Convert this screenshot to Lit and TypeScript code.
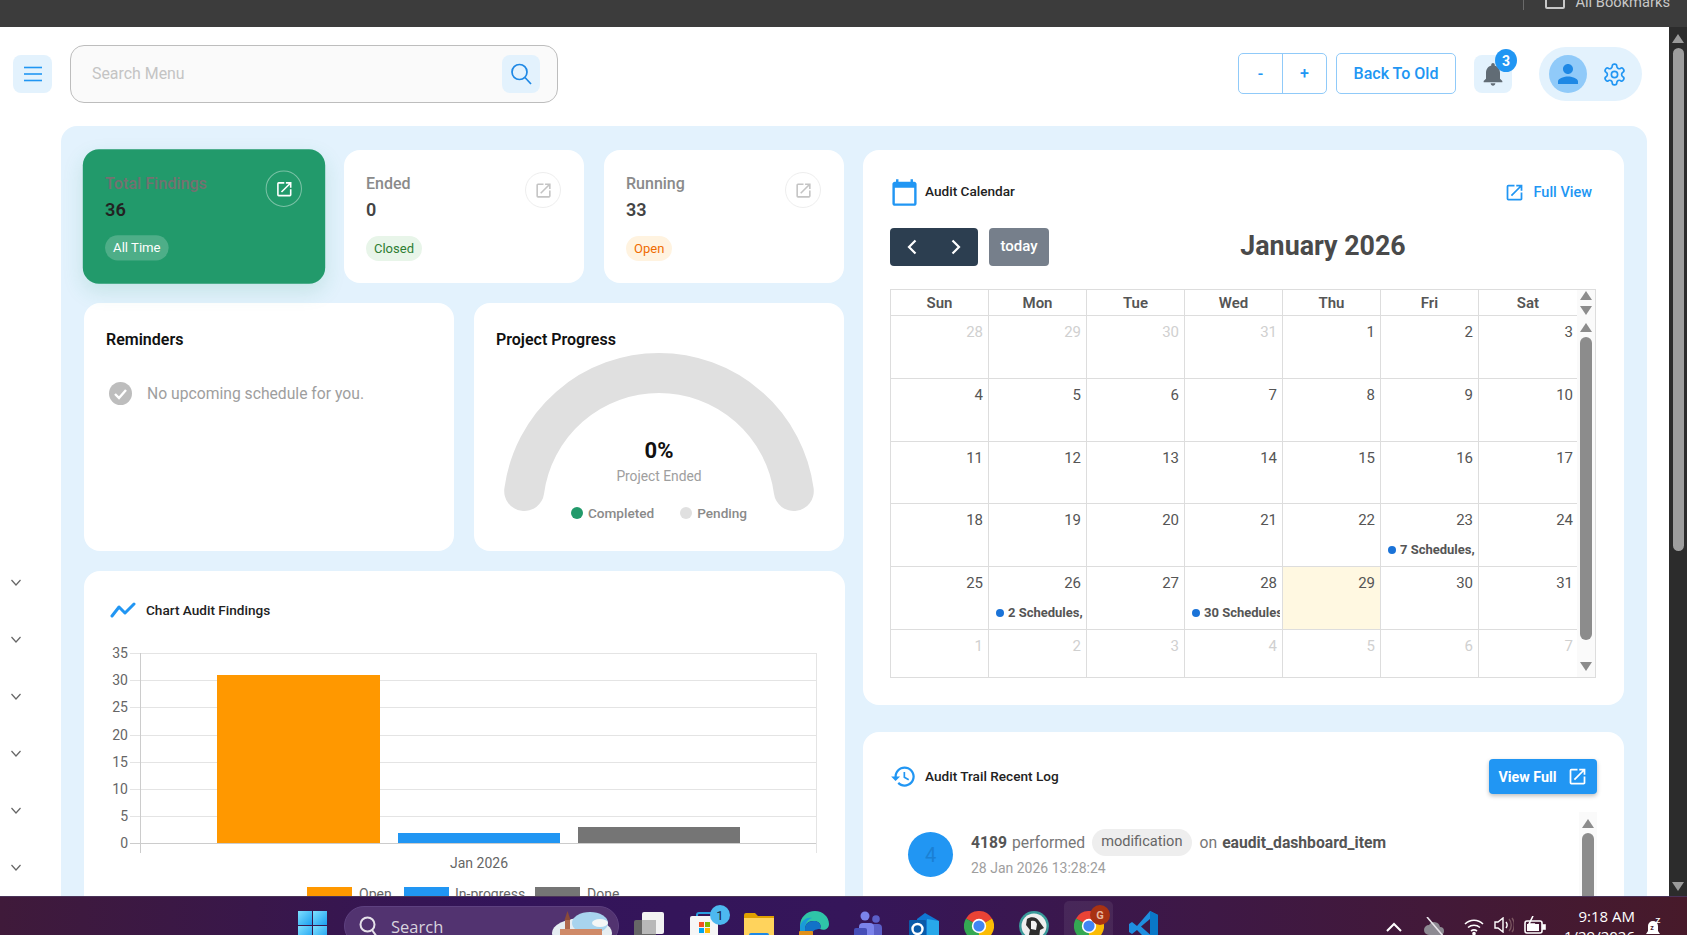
import { LitElement, html, css, svg } from 'lit';
import { customElement } from 'lit/decorators.js';
import { classMap } from 'lit/directives/class-map.js';

const OPEN_NEW =
  'M19 19H5V5h7V3H5a2 2 0 0 0-2 2v14a2 2 0 0 0 2 2h14c1.1 0 2-.9 2-2v-7h-2v7zM14 3v2h3.59l-9.83 9.83 1.41 1.41L19 6.41V10h2V3h-7z';
const GEAR =
  'M12.22 2h-.44a2 2 0 0 0-2 2v.18a2 2 0 0 1-1 1.73l-.43.25a2 2 0 0 1-2 0l-.15-.08a2 2 0 0 0-2.73.73l-.22.38a2 2 0 0 0 .73 2.73l.15.1a2 2 0 0 1 1 1.72v.51a2 2 0 0 1-1 1.74l-.15.09a2 2 0 0 0-.73 2.73l.22.38a2 2 0 0 0 2.73.73l.15-.08a2 2 0 0 1 2 0l.43.25a2 2 0 0 1 1 1.73V20a2 2 0 0 0 2 2h.44a2 2 0 0 0 2-2v-.18a2 2 0 0 1 1-1.73l.43-.25a2 2 0 0 1 2 0l.15.08a2 2 0 0 0 2.73-.73l.22-.39a2 2 0 0 0-.73-2.73l-.15-.08a2 2 0 0 1-1-1.74v-.5a2 2 0 0 1 1-1.74l.15-.09a2 2 0 0 0 .73-2.73l-.22-.38a2 2 0 0 0-2.73-.73l-.15.08a2 2 0 0 1-2 0l-.43-.25a2 2 0 0 1-1-1.73V4a2 2 0 0 0-2-2z';

const matIcon = (d: string, size: number, cls = '') =>
  html`<svg class=${cls} width=${size} height=${size} viewBox="0 0 24 24" fill="currentColor"><path d=${d} /></svg>`;

const chromeIcon = html`<svg width="30" height="30" viewBox="0 0 30 30">
  <path d="M15 15L2 7.500A15 15 0 0 1 28 7.500z" fill="#ea4335" />
  <path d="M15 15L28 7.500A15 15 0 0 1 15 30z" fill="#fbbc04" />
  <path d="M15 15L15 30A15 15 0 0 1 2 7.500z" fill="#34a853" />
  <circle cx="15" cy="15" r="7.200" fill="#fff" />
  <circle cx="15" cy="15" r="5.600" fill="#4285f4" />
</svg>`;

interface Stat {
  title: string;
  value: string;
  badge: string;
  kind: string;
}

const STATS: Stat[] = [
  { title: 'Total Findings', value: '36', badge: 'All Time', kind: 'active' },
  { title: 'Ended', value: '0', badge: 'Closed', kind: 'closed' },
  { title: 'Running', value: '33', badge: 'Open', kind: 'open' },
];

interface Day {
  n: number;
  other?: boolean;
  today?: boolean;
  event?: string;
}

const buildDays = (): Day[] => {
  const days: Day[] = [28, 29, 30, 31].map((n) => ({ n, other: true }));
  for (let n = 1; n <= 31; n++) {
    const d: Day = { n };
    if (n === 23) d.event = '7 Schedules,';
    if (n === 26) d.event = '2 Schedules,';
    if (n === 28) d.event = '30 Schedules,';
    if (n === 29) d.today = true;
    days.push(d);
  }
  for (let n = 1; n <= 7; n++) days.push({ n, other: true });
  return days;
};

const TICKS = [
  { v: 35, y: 653 },
  { v: 30, y: 680 },
  { v: 25, y: 707 },
  { v: 20, y: 735 },
  { v: 15, y: 762 },
  { v: 10, y: 789 },
  { v: 5, y: 816 },
  { v: 0, y: 843 },
];

const BARS = [
  { x: 217, w: 163, top: 675, fill: '#ff9800' },
  { x: 398, w: 162, top: 833, fill: '#2196f3' },
  { x: 578, w: 162, top: 827, fill: '#757575' },
];

const LEGEND = [
  { x: 307, label: 'Open', fill: '#ff9800' },
  { x: 404, label: 'In-progress', fill: '#2196f3', tx: 51 },
  { x: 535, label: 'Done', fill: '#757575' },
];

@customElement('app-root')
export class AppRoot extends LitElement {
  static styles = css`
    :host {
      display: flex;
      flex-direction: column;
      height: 935px;
      overflow: hidden;
      font-family: Roboto, 'Liberation Sans', sans-serif;
      background: #fff;
    }

    svg {
      display: block;
      flex: none;
    }

    /* browser chrome, only the bottom of it shows */
    .chrome {
      height: 27px;
      flex: none;
      background: #3c3c3c;
      display: flex;
      justify-content: flex-end;
      align-items: flex-start;
      overflow: hidden;
      padding-right: 17px;
      color: #c8c8c8;
      font-size: 14.7px;
    }
    .chrome-sep {
      width: 1px;
      height: 10px;
      background: #6a6a6a;
      margin-right: 21px;
    }
    .chrome-box {
      width: 20px;
      height: 17px;
      margin-top: -8px;
      margin-right: 10px;
      border: 2px solid #c8c8c8;
      border-radius: 2px;
      box-sizing: border-box;
    }
    .chrome-text {
      margin-top: -7px;
    }

    .page {
      flex: 1;
      min-height: 0;
      display: flex;
    }
    .content {
      flex: 1;
      min-width: 0;
      display: flex;
      flex-direction: column;
    }

    .page-scroll {
      width: 18px;
      flex: none;
      background: #2c2c2c;
      display: flex;
      flex-direction: column;
      align-items: center;
      position: relative;
    }
    .page-scroll .up {
      margin-top: 7px;
    }
    .page-scroll .thumb {
      width: 11px;
      height: 503px;
      margin-top: 5px;
      border-radius: 6px;
      background: #9e9e9e;
    }
    .page-scroll .down {
      margin-top: auto;
      margin-bottom: 5px;
    }
    .arrow-up {
      width: 0;
      height: 0;
      border-left: 6px solid transparent;
      border-right: 6px solid transparent;
      border-bottom: 9px solid #9a9a9a;
    }
    .arrow-down {
      width: 0;
      height: 0;
      border-left: 6px solid transparent;
      border-right: 6px solid transparent;
      border-top: 9px solid #9a9a9a;
    }

    /* top header */
    .header {
      height: 99px;
      flex: none;
      box-sizing: border-box;
      padding: 0 27px 5px 13px;
      display: flex;
      align-items: center;
    }
    .soft-btn {
      width: 39px;
      height: 38px;
      background: #e3f2fd;
      border-radius: 8px;
      display: flex;
      align-items: center;
      justify-content: center;
      color: #2196f3;
      flex: none;
      position: relative;
    }
    .search {
      width: 488px;
      height: 58px;
      margin-left: 18px;
      box-sizing: border-box;
      border: 1px solid #bdbdbd;
      border-radius: 14px;
      background: #fafafa;
      display: flex;
      align-items: center;
      justify-content: space-between;
      padding: 0 17px 2px 21px;
      font-size: 15.9px;
      color: #c4c4c4;
    }
    .search .soft-btn {
      width: 38px;
      margin-top: 2px;
      color: #1e88e5;
    }
    .header-right {
      margin-left: auto;
      display: flex;
      align-items: center;
    }
    .zoom-group {
      display: flex;
      height: 41px;
      margin-top: -1px;
      box-sizing: border-box;
      border: 1px solid #90caf9;
      border-radius: 5px;
      color: #2196f3;
      font-size: 16px;
      font-weight: 500;
    }
    .zoom-group span {
      width: 43px;
      display: flex;
      align-items: center;
      justify-content: center;
    }
    .zoom-group span + span {
      border-left: 1px solid #90caf9;
    }
    .back-btn {
      height: 41px;
      width: 120px;
      margin: -1px 0 0 9px;
      box-sizing: border-box;
      border: 1px solid #90caf9;
      border-radius: 5px;
      color: #2196f3;
      font-size: 16px;
      font-weight: 500;
      display: flex;
      align-items: center;
      justify-content: center;
    }
    .bell {
      margin-left: 18px;
      width: 38px;
      color: #616c75;
    }
    .bell-badge {
      position: absolute;
      top: -6px;
      right: -5px;
      width: 22px;
      height: 23px;
      border-radius: 50%;
      background: #2196f3;
      color: #fff;
      font-size: 14px;
      font-weight: 700;
      display: flex;
      align-items: center;
      justify-content: center;
    }
    .user-pill {
      margin-left: 27px;
      width: 103px;
      height: 54px;
      background: #e3f2fd;
      border-radius: 27px;
      display: flex;
      align-items: center;
      padding-left: 10px;
      box-sizing: border-box;
      color: #2196f3;
    }
    .avatar {
      width: 38px;
      height: 38px;
      border-radius: 50%;
      background: #90caf9;
      color: #1e88e5;
      display: flex;
      align-items: center;
      justify-content: center;
      margin-right: 15px;
    }

    .body {
      flex: 1;
      min-height: 0;
      display: flex;
    }

    /* sidebar, labels are hidden in the collapsed state */
    .sidebar {
      width: 61px;
      flex: none;
      box-sizing: border-box;
      display: flex;
      flex-direction: column;
      color: #666;
      overflow: hidden;
    }
    .side-mark {
      width: 1px;
      height: 11px;
      margin-top: 191px;
      background: #1565c0;
    }
    .side-rule {
      width: 43px;
      height: 1px;
      margin-top: 172px;
      margin-bottom: 65px;
      background: #eeeeee;
    }
    .side-chevron {
      margin: 0 0 0 11px;
      height: 57px;
      flex: none;
    }

    .panel {
      flex: 1;
      min-width: 0;
      margin-right: 22px;
      background: #e3f2fd;
      border-radius: 16px 16px 0 0;
      padding: 24px 23px 0;
      box-sizing: border-box;
      display: grid;
      grid-template-columns: 761px 761px;
      column-gap: 18px;
      align-items: start;
      overflow: hidden;
    }
    .col {
      display: flex;
      flex-direction: column;
      gap: 20px;
    }
    .col.right {
      gap: 27px;
    }
    .card {
      background: #fff;
      border-radius: 16px;
      box-sizing: border-box;
    }

    /* stat cards */
    .stats {
      width: 760px;
      display: grid;
      grid-template-columns: repeat(3, 1fr);
      gap: 20px;
    }
    .stat {
      height: 133px;
      padding: 23px 22px 0;
      position: relative;
    }
    .stat-title {
      font-size: 16px;
      font-weight: 500;
      line-height: 22px;
      color: #8a8a8a;
    }
    .stat-value {
      font-size: 18px;
      font-weight: 600;
      line-height: 22px;
      margin-top: 4px;
      color: #444;
    }
    .stat-badge {
      display: inline-block;
      margin-top: 15px;
      height: 25px;
      line-height: 25px;
      padding: 0 8px;
      border-radius: 13px;
      font-size: 13px;
    }
    .stat-badge.closed {
      background: #e8f5e9;
      color: #2e7d32;
    }
    .stat-badge.open {
      background: #fff3e0;
      color: #ef6c00;
    }
    .stat-badge.active {
      margin-top: 14px;
      background: rgba(255, 255, 255, 0.2);
      color: #fff;
    }
    .stat-link {
      position: absolute;
      top: 22px;
      right: 23px;
      width: 36px;
      height: 36px;
      border: 1px solid #eeeeee;
      border-radius: 50%;
      box-sizing: border-box;
      color: #c4c4c4;
      display: flex;
      align-items: center;
      justify-content: center;
    }
    .stat.active {
      background: #229a6b;
      transform: scale(1.01);
      box-shadow: 0 8px 20px rgba(34, 154, 107, 0.15);
    }
    .stat.active .stat-title {
      color: #757070;
    }
    .stat.active .stat-value {
      color: #222;
    }
    .stat.active .stat-link {
      top: 21px;
      border-color: rgba(255, 255, 255, 0.4);
      color: #fff;
    }

    .row2 {
      width: 760px;
      display: grid;
      grid-template-columns: 370px 370px;
      gap: 20px;
    }
    .row2 .card {
      height: 248px;
      padding: 26px 22px;
    }
    .card-title {
      font-size: 16px;
      font-weight: 600;
      line-height: 22px;
      color: #111;
    }
    .no-schedule {
      margin: 31px 0 0 3px;
      display: flex;
      align-items: center;
      gap: 15px;
      font-size: 15.7px;
      color: #9e9e9e;
    }

    /* gauge */
    .gauge {
      position: relative;
      height: 180px;
      margin-top: 2px;
      display: flex;
      flex-direction: column;
      align-items: center;
    }
    .gauge svg {
      position: absolute;
      top: 0;
      left: 7px;
    }
    .gauge-value {
      margin-top: 85px;
      font-size: 22px;
      font-weight: 700;
      line-height: 26px;
      color: #111;
      position: relative;
    }
    .gauge-label {
      margin-top: 3px;
      font-size: 13.8px;
      line-height: 18px;
      color: #9e9e9e;
      position: relative;
    }
    .gauge-legend {
      margin-top: 19px;
      display: flex;
      gap: 26px;
      font-size: 13.6px;
      font-weight: 500;
      line-height: 18px;
      color: #8a8a8a;
      position: relative;
    }
    .gauge-legend span {
      display: flex;
      align-items: center;
      gap: 5px;
    }
    .dot {
      width: 12px;
      height: 12px;
      border-radius: 50%;
    }
    .dot.done {
      background: #229a6b;
    }
    .dot.pending {
      background: #e0e0e0;
    }

    /* chart */
    .chart-card {
      padding-top: 28px;
      height: 500px;
    }
    .head-row {
      display: flex;
      align-items: center;
      font-size: 13.6px;
      font-weight: 500;
      color: #222;
    }
    .chart-card .head-row {
      height: 22px;
      padding-left: 26px;
      gap: 10px;
      color: #222;
    }
    .chart-svg {
      margin-top: 19px;
    }
    .chart-svg text {
      font-family: Roboto, 'Liberation Sans', sans-serif;
      font-size: 14px;
      fill: #666;
    }

    /* calendar */
    .cal-card {
      height: 555px;
      padding: 30px 27px 0 27px;
    }
    .cal-head {
      height: 24px;
      gap: 6px;
      color: #2196f3;
    }
    .cal-head .name,
    .trail-head .name {
      color: #222;
      padding-bottom: 2px;
    }
    .full-view {
      margin-left: auto;
      margin-right: 5px;
      display: flex;
      align-items: center;
      gap: 9px;
      font-size: 14.5px;
      color: #2196f3;
    }
    .toolbar {
      margin-top: 24px;
      height: 38px;
      display: flex;
      align-items: center;
      justify-content: space-between;
    }
    .toolbar-left {
      display: flex;
      gap: 11px;
    }
    .nav {
      display: flex;
      width: 88px;
      height: 38px;
      background: #2c3e50;
      border-radius: 4px;
      color: #fff;
    }
    .nav div {
      flex: 1;
      display: flex;
      align-items: center;
      justify-content: center;
    }
    .today-btn {
      width: 60px;
      height: 38px;
      box-sizing: border-box;
      padding-bottom: 2px;
      border-radius: 4px;
      background: #767f8b;
      color: #fff;
      font-size: 15px;
      font-weight: 500;
      display: flex;
      align-items: center;
      justify-content: center;
    }
    .month {
      font-size: 26.8px;
      font-weight: 700;
      color: #4a4a4a;
      padding-bottom: 2px;
    }
    .toolbar-end {
      width: 0;
    }
    .cal-table {
      margin-top: 23px;
      width: 706px;
      box-sizing: border-box;
      border: 1px solid #ddd;
      display: grid;
      grid-template-columns: repeat(7, 98px) 1fr;
      grid-template-rows: 26px 63px 63px 62px 63px 63px 47px;
      position: relative;
    }
    .dow {
      font-size: 15px;
      font-weight: 600;
      color: #555;
      display: flex;
      align-items: center;
      justify-content: center;
      border-right: 1px solid #ddd;
      border-bottom: 1px solid #ddd;
    }
    .dow.last {
      border-right: none;
    }
    .cell {
      border-right: 1px solid #ddd;
      border-bottom: 1px solid #ddd;
      padding: 5.5px 5px 0 0;
      text-align: right;
      font-size: 15px;
      line-height: 20px;
      color: #555;
      overflow: hidden;
      min-width: 0;
    }
    .cell.last {
      border-right: none;
      padding-right: 4px;
    }
    .cell.other {
      color: #d0d0d0;
    }
    .cell.bottom {
      border-bottom: none;
    }
    .cell.today {
      background: #fff8e1;
    }
    .event {
      margin-top: 11.5px;
      padding-left: 7px;
      display: flex;
      align-items: center;
      gap: 4px;
      white-space: nowrap;
      font-size: 13px;
      font-weight: 700;
      line-height: 18px;
      color: #555;
      margin-right: -3px;
      overflow: hidden;
    }
    .event i {
      width: 8px;
      height: 8px;
      flex: none;
      border-radius: 50%;
      background: #1a73d8;
    }
    .cal-scroll-head {
      grid-column: 8;
      grid-row: 1;
      background: #fafafa;
      display: flex;
      flex-direction: column;
      align-items: center;
      justify-content: center;
      gap: 6px;
    }
    .cal-scroll {
      grid-column: 8;
      grid-row: 2 / 8;
      background: #fafafa;
      display: flex;
      flex-direction: column;
      align-items: center;
      padding: 7px 0 6px;
    }
    .cal-scroll .thumb,
    .log-scroll .thumb {
      width: 12px;
      border-radius: 6px;
      background: #8c8c8c;
    }
    .cal-scroll .thumb {
      height: 303px;
      margin-top: 5px;
    }
    .cal-scroll .arrow-down {
      margin-top: auto;
    }
    .small-up {
      border-bottom-color: #8c8c8c;
    }
    .small-down {
      border-top-color: #8c8c8c;
    }

    /* audit trail */
    .trail-card {
      height: 300px;
      padding: 27px 27px 0 27px;
    }
    .trail-head {
      height: 35px;
      gap: 8px;
      color: #2196f3;
    }
    .view-full {
      margin-left: auto;
      width: 108px;
      height: 35px;
      background: #2196f3;
      border-radius: 4px;
      box-shadow: 0 2px 4px rgba(0, 0, 0, 0.25);
      color: #fff;
      font-size: 14.3px;
      font-weight: 700;
      display: flex;
      align-items: center;
      justify-content: center;
      gap: 10px;
    }
    .log-area {
      margin-top: 18px;
      display: flex;
      height: 200px;
    }
    .log-list {
      flex: 1;
      padding: 20px 0 0 18px;
    }
    .log {
      display: flex;
      gap: 18px;
    }
    .log-avatar {
      width: 45px;
      height: 45px;
      border-radius: 50%;
      background: #2196f3;
      color: #1a80d4;
      font-size: 20px;
      display: flex;
      align-items: center;
      justify-content: center;
      flex: none;
    }
    .log-line {
      margin-top: -3px;
      display: flex;
      align-items: center;
      height: 27px;
      font-size: 15.7px;
      color: #777;
      gap: 5px;
    }
    .log-line b {
      font-weight: 700;
      color: #555;
    }
    .log-pill {
      height: 27px;
      line-height: 25px;
      padding: 0 9px;
      margin: 0 3px 0 2px;
      border-radius: 14px;
      background: #eeeeee;
      color: #666;
      font-size: 14.6px;
    }
    .log-date {
      margin-top: 3px;
      font-size: 14px;
      line-height: 18px;
      color: #9e9e9e;
    }
    .log-scroll {
      width: 18px;
      background: #fafafa;
      display: flex;
      flex-direction: column;
      align-items: center;
      padding-top: 7px;
    }
    .log-scroll .thumb {
      margin-top: 5px;
      height: 150px;
    }

    /* windows taskbar, cut off by the window bottom */
    .taskbar {
      height: 39px;
      flex: none;
      box-sizing: border-box;
      border-top: 1px solid #4a3358;
      background: linear-gradient(90deg, #3f1a3a 0%, #33145a 30%, #35165a 50%, #3e1845 72%, #471a2a 100%);
      display: flex;
      align-items: flex-start;
      padding: 14px 0 0 298px;
      overflow: hidden;
      color: #fff;
    }
    .task-search {
      width: 275px;
      height: 40px;
      margin: -5px 15px 0 17px;
      border-radius: 20px;
      background: #523370;
      border: 1px solid #5e4180;
      display: flex;
      align-items: flex-start;
      padding: 9px 0 0 14px;
      box-sizing: border-box;
      gap: 13px;
      font-family: 'Open Sans', sans-serif;
      font-size: 16.5px;
      line-height: 22px;
      color: #d8d4de;
      position: relative;
    }
    .task-search svg.scene {
      position: absolute;
      right: 6px;
      top: 4px;
    }
    .task-icons {
      display: flex;
      gap: 25px;
    }
    .task-icon {
      width: 30px;
      height: 30px;
      position: relative;
    }
    .task-icon.current::before {
      content: '';
      position: absolute;
      left: -10px;
      right: -9px;
      top: -10px;
      height: 50px;
      border-radius: 5px;
      background: rgba(255, 255, 255, 0.07);
    }
    .task-icon svg {
      position: relative;
    }
    .count {
      position: absolute;
      top: -6px;
      right: -11px;
      width: 20px;
      height: 20px;
      border-radius: 50%;
      background: #4db8f0;
      color: #1b2440;
      font-size: 13px;
      display: flex;
      align-items: center;
      justify-content: center;
    }
    .g-badge {
      position: absolute;
      top: -6px;
      right: -6px;
      width: 20px;
      height: 20px;
      border-radius: 50%;
      background: #a83212;
      color: #e8b8a0;
      font-size: 11px;
      font-weight: 700;
      display: flex;
      align-items: center;
      justify-content: center;
    }
    .tray {
      margin-left: auto;
      display: flex;
      align-items: flex-start;
      padding-right: 25px;
    }
    .tray-up {
      margin-top: 11px;
    }
    .tray-cloud {
      margin: 6px 0 0 22px;
    }
    .tray-wifi {
      margin: 7px 0 0 18px;
    }
    .tray-sound {
      margin: 6px 0 0 10px;
    }
    .tray-battery {
      margin: 5px 0 0 10px;
    }
    .clock {
      margin: -5px 0 0 18px;
      text-align: right;
      font-family: 'Open Sans', sans-serif;
      font-size: 15px;
      line-height: 20px;
    }
    .tray-bell {
      margin: 6px 0 0 10px;
    }
  `;

  private renderStat(s: Stat) {
    return html`
      <div class=${classMap({ card: true, stat: true, active: s.kind === 'active' })}>
        <div class="stat-title">${s.title}</div>
        <div class="stat-value">${s.value}</div>
        <span class="stat-badge ${s.kind}">${s.badge}</span>
        <div class="stat-link">${matIcon(OPEN_NEW, 19)}</div>
      </div>
    `;
  }

  private renderChart() {
    return html`
      <svg class="chart-svg" width="760" height="340" viewBox="84 640 760 340">
        ${TICKS.map(
          (t) => svg`
            <line x1="130" x2="816" y1=${t.y + 0.5} y2=${t.y + 0.5} stroke=${t.v === 0 ? '#cccccc' : '#e4e4e4'} />
            <text x="128" y=${t.y + 5} text-anchor="end">${t.v}</text>
          `,
        )}
        <line x1="140.5" x2="140.5" y1="653" y2="853" stroke="#cccccc" />
        <line x1="816.5" x2="816.5" y1="653" y2="853" stroke="#e4e4e4" />
        ${BARS.map((b) => svg`<rect x=${b.x} y=${b.top} width=${b.w} height=${843 - b.top} fill=${b.fill} />`)}
        <text x="479" y="868" text-anchor="middle">Jan 2026</text>
        ${LEGEND.map(
          (l) => svg`
            <rect x=${l.x} y="887" width="45" height="14" fill=${l.fill} />
            <text x=${l.x + (l.tx ?? 52)} y="899">${l.label}</text>
          `,
        )}
      </svg>
    `;
  }

  private renderCalendar() {
    const dows = ['Sun', 'Mon', 'Tue', 'Wed', 'Thu', 'Fri', 'Sat'];
    const days = buildDays();
    return html`
      <div class="cal-table">
        ${dows.map((d, i) => html`<div class=${classMap({ dow: true, last: i === 6 })}>${d}</div>`)}
        <div class="cal-scroll-head">
          <div class="arrow-up small-up"></div>
          <div class="arrow-down small-down"></div>
        </div>
        ${days.map(
          (d, i) => html`
            <div
              class=${classMap({
                cell: true,
                other: !!d.other,
                today: !!d.today,
                last: i % 7 === 6,
                bottom: i >= 35,
              })}
            >
              ${d.n}
              ${d.event ? html`<div class="event"><i></i>${d.event}</div>` : ''}
            </div>
          `,
        )}
        <div class="cal-scroll">
          <div class="arrow-up small-up"></div>
          <div class="thumb"></div>
          <div class="arrow-down small-down"></div>
        </div>
      </div>
    `;
  }

  private renderTaskbar() {
    return html`
      <div class="taskbar">
        <svg width="29" height="30" viewBox="0 0 29 30">
          <defs>
            <linearGradient id="win" x1="0" y1="0" x2="1" y2="1">
              <stop offset="0" stop-color="#7fe0ff" />
              <stop offset="1" stop-color="#1a9ff0" />
            </linearGradient>
          </defs>
          <rect width="14" height="14" fill="url(#win)" />
          <rect x="15" width="14" height="14" fill="url(#win)" />
          <rect y="15" width="14" height="14" fill="url(#win)" />
          <rect x="15" y="15" width="14" height="14" fill="url(#win)" />
        </svg>
        <div class="task-search">
          <svg width="19" height="22" viewBox="0 0 19 22" fill="none" stroke="#e6e2ea" stroke-width="2">
            <circle cx="8.500" cy="8.500" r="7" />
            <line x1="13" y1="14" x2="18" y2="21" />
          </svg>
          Search
          <svg class="scene" width="60" height="34" viewBox="0 0 60 34">
            <ellipse cx="30" cy="22" rx="30" ry="15" fill="#e6eef2" />
            <ellipse cx="38" cy="12" rx="18" ry="11" fill="#a8d4ee" />
            <ellipse cx="48" cy="12" rx="8" ry="4" fill="#f4f6f6" />
            <rect x="13" y="8" width="5" height="12" fill="#b06a4e" />
            <path d="M15.500 0l3 9h-6z" fill="#8a4a38" />
            <rect x="8" y="18" width="42" height="16" fill="#cf8a68" />
            <rect x="8" y="24" width="42" height="2" fill="#e8c4a8" />
          </svg>
        </div>
        <div class="task-icons">
          <div class="task-icon">
            <svg width="30" height="30" viewBox="0 0 30 30">
              <rect x="0" y="9" width="22" height="22" rx="2" fill="#666" />
              <rect x="8" y="1" width="22" height="22" rx="2" fill="#f2f2f2" />
              <rect x="8" y="9" width="14" height="14" fill="#b8b8b8" />
            </svg>
          </div>
          <div class="task-icon">
            <svg width="30" height="30" viewBox="0 0 30 30">
              <path d="M8 7V4a2 2 0 0 1 2-2h12" fill="none" stroke="#2a9fe0" stroke-width="2" />
              <rect x="1" y="5" width="28" height="27" rx="2" fill="#f6f6f6" />
              <rect x="10" y="11" width="5" height="5" fill="#f25022" />
              <rect x="16" y="11" width="5" height="5" fill="#7fba00" />
              <rect x="10" y="17" width="5" height="5" fill="#00a4ef" />
              <rect x="16" y="17" width="5" height="5" fill="#ffb900" />
            </svg>
            <span class="count">1</span>
          </div>
          <div class="task-icon">
            <svg width="30" height="30" viewBox="0 0 30 30">
              <path d="M0 4a2 2 0 0 1 2-2h9l3 3h16v26H0z" fill="#e0a000" />
              <rect y="7" width="30" height="24" fill="#ffd35c" />
              <rect x="5" y="22" width="20" height="9" rx="2" fill="#1e88e5" />
            </svg>
          </div>
          <div class="task-icon">
            <svg width="30" height="30" viewBox="0 0 30 30">
              <path d="M1 15C1 6 8 0 16 0c8 0 14 6 14 13 0 5-5 7-9 5 2-4-1-8-6-8C9 10 6 13 6 18c-3 0-5-1-5-3z" fill="#2fc4a8" />
              <path d="M1 15C3 9 8 6 13 7c-4 1-7 5-7 11l0 2H1z" fill="#1a9ad8" />
              <path d="M6 18c0-5 3-8 9-8 5 0 8 4 6 8-5 0-8 2-8 6 0 2 1 4 3 6C8 30 6 23 6 18z" fill="#1272c8" />
              <rect x="0" y="20" width="14" height="12" rx="1" fill="#e0901a" />
            </svg>
          </div>
          <div class="task-icon">
            <svg width="30" height="30" viewBox="0 0 30 30">
              <circle cx="11" cy="5" r="4.500" fill="#7b83eb" />
              <circle cx="22" cy="8" r="3.800" fill="#5b5fc7" />
              <rect x="16" y="13" width="12" height="20" rx="4" fill="#5b5fc7" />
              <rect x="5" y="12" width="15" height="22" rx="4" fill="#7b83eb" />
              <rect x="0" y="17" width="13" height="13" rx="2" fill="#464eb8" />
            </svg>
          </div>
          <div class="task-icon">
            <svg width="30" height="30" viewBox="0 0 30 30">
              <path d="M16 2l14 8v22H8V8z" fill="#0f78d4" />
              <path d="M18 8l12 2v22H18z" fill="#28a8ea" />
              <rect x="0" y="9" width="17" height="18" rx="1" fill="#0a5aa8" />
              <circle cx="8.500" cy="18" r="5" fill="none" stroke="#fff" stroke-width="2.400" />
            </svg>
          </div>
          <div class="task-icon">${chromeIcon}</div>
          <div class="task-icon">
            <svg width="30" height="30" viewBox="0 0 30 30">
              <circle cx="15" cy="15" r="15" fill="#3a9a9a" />
              <circle cx="15" cy="15" r="12.500" fill="#efefef" />
              <path d="M8 8c4-3 10-2 12 2l5 7-4 2-1 9H9l2-9-4-5z" fill="#2e2e2e" />
              <path d="M12 10c3-1 5 0 6 3l-1 6-5-1z" fill="#f4f4f4" />
            </svg>
          </div>
          <div class="task-icon current">
            ${chromeIcon}
            <span class="g-badge">G</span>
          </div>
          <div class="task-icon">
            <svg width="30" height="30" viewBox="0 0 30 30">
              <path d="M21 0l8 4v26l-8 2L8 19l-5 4-3-2V13l3-2 5 4z" fill="#1e8fe0" />
              <path d="M21 8L12 15.500l9 8z" fill="#3d1848" />
              <path d="M21 0l8 4v26l-8 2z" fill="#0a78c8" />
            </svg>
          </div>
        </div>
        <div class="tray">
          <svg class="tray-up" width="16" height="10" viewBox="0 0 16 10" fill="none" stroke="#fff" stroke-width="2">
            <polyline points="1,9 8,2 15,9" />
          </svg>
          <svg class="tray-cloud" width="22" height="22" viewBox="0 0 22 22">
            <path d="M5 18a5 5 0 0 1 0-10 6 6 0 0 1 11 2 4 4 0 0 1 0 8z" fill="#8d8a92" />
            <line x1="3" y1="0" x2="20" y2="20" stroke="#e8e4ea" stroke-width="1.600" />
          </svg>
          <svg class="tray-wifi" width="20" height="18" viewBox="0 0 20 18" fill="none" stroke="#fff" stroke-width="1.600">
            <path d="M1 6c5-5 13-5 18 0M4 9.500c3.500-3 8.500-3 12 0M7 13c2-1.500 4-1.500 6 0" />
            <circle cx="10" cy="15.500" r="1" fill="#fff" />
          </svg>
          <svg class="tray-sound" width="20" height="16" viewBox="0 0 20 16" fill="none" stroke="#fff" stroke-width="1.400">
            <path d="M1 5h3l5-4v14l-5-4H1z" />
            <path d="M12 5c1.500 2 1.500 4 0 6" />
            <path d="M15 2c3 3 3 9 0 12M18 1c3 4 3 10 0 14" stroke="#7a5560" />
          </svg>
          <svg class="tray-battery" width="22" height="20" viewBox="0 0 22 20" fill="none" stroke="#fff" stroke-width="1.600">
            <rect x="1" y="5" width="17" height="12" rx="2" />
            <rect x="19" y="9" width="2" height="4" fill="#fff" />
            <path d="M9 0L5 8h5l-2 4" />
            <rect x="3" y="8" width="12" height="7" fill="#fff" stroke="none" />
          </svg>
          <div class="clock">9:18 AM<br />1/29/2026</div>
          <svg class="tray-bell" width="17" height="22" viewBox="0 0 17 22" fill="#fff">
            <path d="M8 4a5 5 0 0 0-5 5v5l-2 3h14l-2-3V9a5 5 0 0 0-5-5zM6 18h4v2H6z" />
            <text x="7" y="13" font-size="7" font-weight="700" text-anchor="middle" fill="#4a1a30" font-family="Roboto">z</text>
            <text x="13" y="6" font-size="8" font-weight="700" text-anchor="middle" fill="#fff" font-family="Roboto">Z</text>
          </svg>
        </div>
      </div>
    `;
  }

  render() {
    return html`
      <div class="chrome">
        <div class="chrome-sep"></div>
        <div class="chrome-box"></div>
        <div class="chrome-text">All Bookmarks</div>
      </div>
      <div class="page">
        <div class="content">
          <div class="header">
            <div class="soft-btn">
              <svg width="20" height="16" viewBox="0 0 20 16" stroke="#2196f3" stroke-width="1.600">
                <line x1="1" x2="19" y1="1.500" y2="1.500" />
                <line x1="1" x2="19" y1="8" y2="8" />
                <line x1="1" x2="19" y1="14.500" y2="14.500" />
              </svg>
            </div>
            <div class="search">
              Search Menu
              <div class="soft-btn">
                <svg width="22" height="22" viewBox="0 0 22 22" fill="none" stroke="currentColor" stroke-width="1.700">
                  <circle cx="9.500" cy="9" r="7.500" />
                  <line x1="15" y1="14.500" x2="21" y2="21" />
                </svg>
              </div>
            </div>
            <div class="header-right">
              <div class="zoom-group"><span>-</span><span>+</span></div>
              <div class="back-btn">Back To Old</div>
              <div class="soft-btn bell">
                ${matIcon(
                  'M12 22c1.100 0 2-.9 2-2h-4c0 1.100.9 2 2 2zm6-6v-5c0-3.070-1.630-5.640-4.500-6.320V4c0-.83-.67-1.500-1.500-1.500s-1.500.67-1.500 1.500v.68C7.640 5.360 6 7.920 6 11v5l-2 2v1h16v-1l-2-2z',
                  28,
                )}
                <span class="bell-badge">3</span>
              </div>
              <div class="user-pill">
                <div class="avatar">
                  ${matIcon(
                    'M12 12c2.210 0 4-1.790 4-4s-1.790-4-4-4-4 1.790-4 4 1.790 4 4 4zm0 2c-2.670 0-8 1.340-8 4v2h16v-2c0-2.660-5.330-4-8-4z',
                    30,
                  )}
                </div>
                <svg width="25" height="25" viewBox="0 0 24 24" fill="none" stroke="currentColor" stroke-width="1.600">
                  <path d=${GEAR} />
                  <circle cx="12" cy="12" r="3" />
                </svg>
              </div>
            </div>
          </div>

          <div class="body">
            <div class="sidebar">
              <div class="side-mark"></div>
              <div class="side-rule"></div>
              ${[0, 1, 2, 3, 4, 5].map(
                () => html`
                  <svg class="side-chevron" width="10" height="7" viewBox="0 0 10 7" fill="none" stroke="#666" stroke-width="1.200">
                    <polyline points="0.500,1 5,6 9.500,1" />
                  </svg>
                `,
              )}
            </div>

            <div class="panel">
              <div class="col">
                <div class="stats">${STATS.map((s) => this.renderStat(s))}</div>
                <div class="row2">
                  <div class="card">
                    <div class="card-title">Reminders</div>
                    <div class="no-schedule">
                      <svg width="23" height="23" viewBox="0 0 23 23">
                        <circle cx="11.500" cy="11.500" r="11.500" fill="#bdbdbd" />
                        <polyline points="6,12 10,16 17,8" fill="none" stroke="#fff" stroke-width="2.400" />
                      </svg>
                      No upcoming schedule for you.
                    </div>
                  </div>
                  <div class="card">
                    <div class="card-title">Project Progress</div>
                    <div class="gauge">
                      <svg width="312" height="160" viewBox="0 0 312 160">
                        <path d="M21.200 138 A136 136 0 0 1 290.800 138" fill="none" stroke="#e0e0e0" stroke-width="40" stroke-linecap="round" />
                      </svg>
                      <div class="gauge-value">0%</div>
                      <div class="gauge-label">Project Ended</div>
                      <div class="gauge-legend">
                        <span><i class="dot done"></i>Completed</span>
                        <span><i class="dot pending"></i>Pending</span>
                      </div>
                    </div>
                  </div>
                </div>
                <div class="card chart-card">
                  <div class="head-row">
                    <svg width="26" height="16" viewBox="0 0 26 16" fill="none" stroke="#2196f3" stroke-width="3" stroke-linecap="round" stroke-linejoin="round">
                      <polyline points="2,14 9,5 15,11 24,2" />
                    </svg>
                    Chart Audit Findings
                  </div>
                  ${this.renderChart()}
                </div>
              </div>

              <div class="col right">
                <div class="card cal-card">
                  <div class="head-row cal-head">
                    ${matIcon(
                      'M20 3h-1V1h-2v2H7V1H5v2H4c-1.100 0-2 .9-2 2v16c0 1.100.9 2 2 2h16c1.100 0 2-.9 2-2V5c0-1.100-.9-2-2-2zm0 18H4V8h16v13z',
                      29,
                    )}
                    <span class="name">Audit Calendar</span>
                    <div class="full-view">${matIcon(OPEN_NEW, 21)}Full View</div>
                  </div>
                  <div class="toolbar">
                    <div class="toolbar-left">
                      <div class="nav">
                        <div>
                          <svg width="10" height="16" viewBox="0 0 10 16" fill="none" stroke="#fff" stroke-width="2.200">
                            <polyline points="8.500,1.500 2,8 8.500,14.500" />
                          </svg>
                        </div>
                        <div>
                          <svg width="10" height="16" viewBox="0 0 10 16" fill="none" stroke="#fff" stroke-width="2.200">
                            <polyline points="1.500,1.500 8,8 1.500,14.500" />
                          </svg>
                        </div>
                      </div>
                      <div class="today-btn">today</div>
                    </div>
                    <div class="month">January 2026</div>
                    <div class="toolbar-end"></div>
                  </div>
                  ${this.renderCalendar()}
                </div>

                <div class="card trail-card">
                  <div class="head-row trail-head">
                    ${matIcon(
                      'M13 3c-4.970 0-9 4.030-9 9H1l3.890 3.890.07.14L9 12H6c0-3.870 3.130-7 7-7s7 3.130 7 7-3.130 7-7 7c-1.930 0-3.680-.79-4.940-2.060l-1.420 1.420C8.270 19.990 10.510 21 13 21c4.970 0 9-4.030 9-9s-4.030-9-9-9zm-1 5v5l4.280 2.540.72-1.210-3.500-2.080V8H12z',
                      27,
                    )}
                    <span class="name">Audit Trail Recent Log</span>
                    <div class="view-full">View Full ${matIcon(OPEN_NEW, 21)}</div>
                  </div>
                  <div class="log-area">
                    <div class="log-list">
                      <div class="log">
                        <div class="log-avatar">4</div>
                        <div>
                          <div class="log-line">
                            <b>4189</b> performed <span class="log-pill">modification</span> on
                            <b>eaudit_dashboard_item</b>
                          </div>
                          <div class="log-date">28 Jan 2026 13:28:24</div>
                        </div>
                      </div>
                    </div>
                    <div class="log-scroll">
                      <div class="arrow-up small-up"></div>
                      <div class="thumb"></div>
                    </div>
                  </div>
                </div>
              </div>
            </div>
          </div>
        </div>
        <div class="page-scroll">
          <div class="arrow-up up"></div>
          <div class="thumb"></div>
          <div class="arrow-down down"></div>
        </div>
      </div>
      ${this.renderTaskbar()}
    `;
  }
}
